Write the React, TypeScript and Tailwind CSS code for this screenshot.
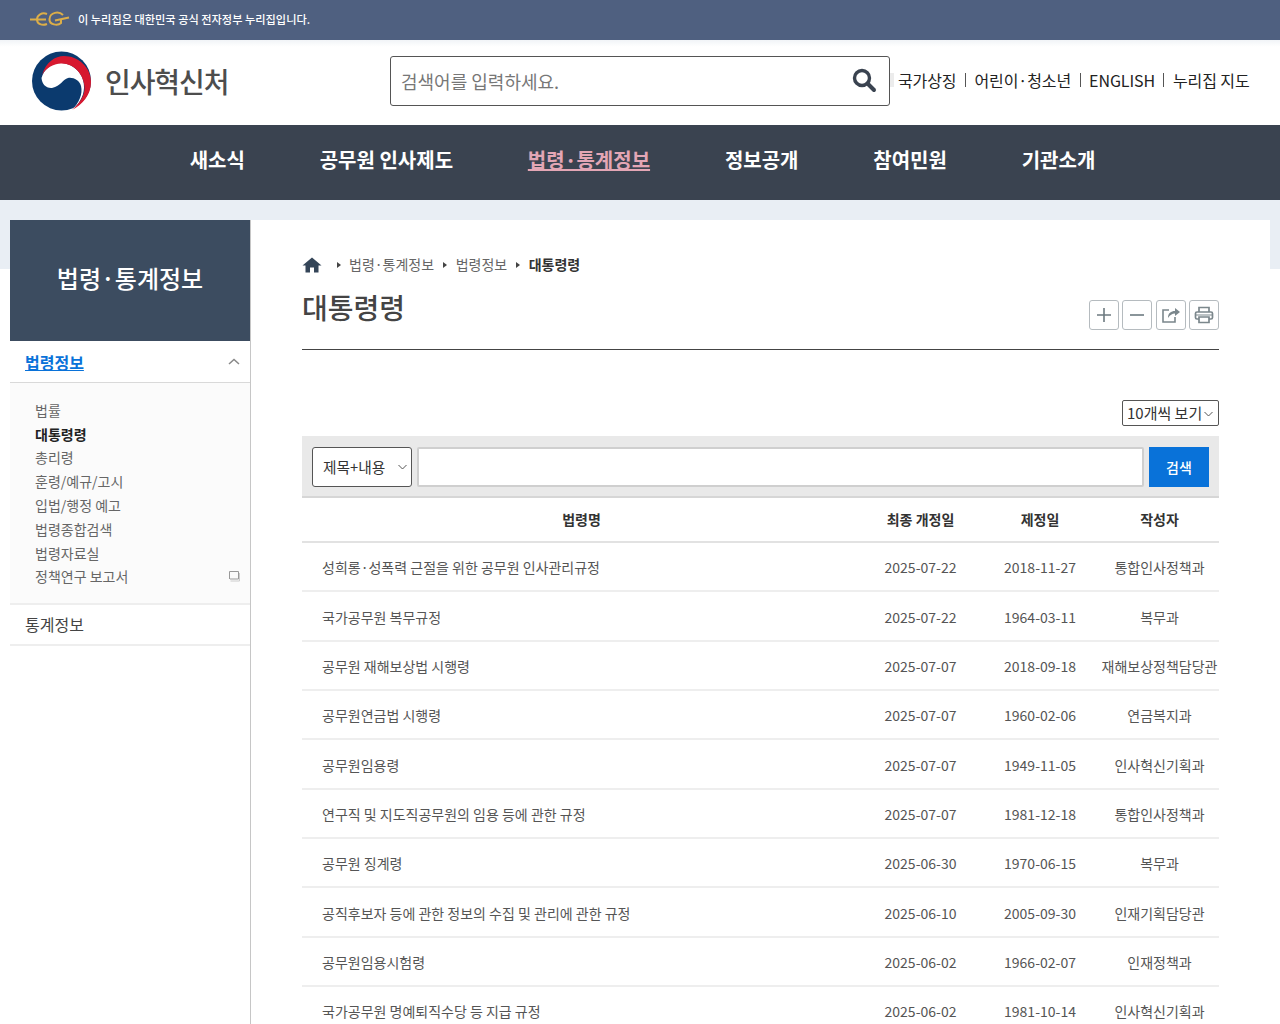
const font = "font-['Noto_Sans_CJK_KR','Noto_Sans',sans-serif]";

const rows = [
  ['성희롱·성폭력 근절을 위한 공무원 인사관리규정', '2025-07-22', '2018-11-27', '통합인사정책과'],
  ['국가공무원 복무규정', '2025-07-22', '1964-03-11', '복무과'],
  ['공무원 재해보상법 시행령', '2025-07-07', '2018-09-18', '재해보상정책담당관'],
  ['공무원연금법 시행령', '2025-07-07', '1960-02-06', '연금복지과'],
  ['공무원임용령', '2025-07-07', '1949-11-05', '인사혁신기획과'],
  ['연구직 및 지도직공무원의 임용 등에 관한 규정', '2025-07-07', '1981-12-18', '통합인사정책과'],
  ['공무원 징계령', '2025-06-30', '1970-06-15', '복무과'],
  ['공직후보자 등에 관한 정보의 수집 및 관리에 관한 규정', '2025-06-10', '2005-09-30', '인재기획담당관'],
  ['공무원임용시험령', '2025-06-02', '1966-02-07', '인재정책과'],
  ['국가공무원 명예퇴직수당 등 지급 규정', '2025-06-02', '1981-10-14', '인사혁신기획과'],
];

const navItems = ['새소식', '공무원 인사제도', '법령·통계정보', '정보공개', '참여민원', '기관소개'];
const subItems = ['법률', '대통령령', '총리령', '훈령/예규/고시', '입법/행정 예고', '법령종합검색', '법령자료실', '정책연구 보고서'];

function Logo() {
  return (
    <svg width="62" height="60" viewBox="0 0 62 60" className="shrink-0 mb-[3px]">
      <circle cx="30.500" cy="30" r="29.500" fill="#0b3a6e" />
      <path d="M10.500 27C13 18 21 11.500 30.500 12C43 12.500 54 24 53 37C52.500 46 48 53 41.300 58.700C48 52 52 43 50 35C48.500 29 42 26 37 27C32 28 30 35 21 37C15 37.500 11 33 10.500 27Z" fill="#fff" />
      <path d="M11 24C15 11 24 5 33 5C47 5 60 16 60 31C60 44 51 54 41.300 58.700C49 52 54 44 53.500 36C53 24 43 12 30 12.500C22 13 15 17 11 24Z" fill="#d7182f" />
    </svg>
  );
}

function EgovMark() {
  return (
    <svg width="40" height="18" viewBox="0 0 40 18" fill="none" stroke="#dcae48" strokeWidth="2" className="shrink-0">
      <path d="M0 9.500H16" />
      <path d="M17 4C12 2 7 5 7 9.500C7 14 12 16 17 14" />
      <path d="M33 5C29 1 20 2 19.500 9C19 15 28 16 31 13V10" />
      <path d="M25 10.500L39 7.500" />
    </svg>
  );
}

function SearchIcon() {
  return (
    <svg width="26" height="26" viewBox="0 0 26 26" fill="none" stroke="#3a4350" className="shrink-0 mb-[2px]">
      <circle cx="11" cy="11" r="7.500" strokeWidth="3.400" />
      <path d="M16.500 16.500L23 23" strokeWidth="4" strokeLinecap="round" />
    </svg>
  );
}

function ToolButton({ children }: { children: React.ReactNode }) {
  return (
    <button className="w-[30px] h-[30px] border border-[#b5bbbf] rounded-[3px] bg-white flex items-center justify-center">
      {children}
    </button>
  );
}

function Caret() {
  return <span className="w-0 h-0 border-y-[3px] border-y-transparent border-l-[4px] border-l-[#444] shrink-0" />;
}

export default function App() {
  return (
    <div className={`${font} relative w-[1280px] h-[1024px] overflow-hidden bg-white text-[#333]`}>
      {/* top notice */}
      <div className="h-10 bg-[#4f6080] flex items-center pl-[30px] gap-2 pb-[2px]">
        <EgovMark />
        <span className="text-[11.200px] font-medium text-white">이 누리집은 대한민국 공식 전자정부 누리집입니다.</span>
      </div>

      {/* header */}
      <header className="h-[85px] bg-linear-to-b from-[#f1f4f7] to-white to-[8%] flex items-center relative">
        <div className="w-[390px] pl-[31px] flex items-center gap-3">
          <Logo />
          <span className="text-[28px] font-medium text-[#4d4d4d] tracking-[-1.100px] leading-none -mt-[3px]">인사혁신처</span>
        </div>
        <div className="w-[500px] h-[50px] border border-[#555] rounded-[3px] flex items-center justify-between pl-2.5 pr-3 -mt-[3px]">
          <span className="text-lg text-[#777]">검색어를 입력하세요.</span>
          <SearchIcon />
        </div>
        <nav className="flex items-center text-base text-[#222] tracking-[-0.100px] -mt-[5px]">
          <span className="w-1 h-3.5 bg-[#ececec] mr-1" />
          <span>국가상징</span>
          <span className="w-px h-3.5 bg-[#555] mx-[8.500px]" />
          <span>어린이·청소년</span>
          <span className="w-px h-3.5 bg-[#555] mx-[8.500px]" />
          <span>ENGLISH</span>
          <span className="w-px h-3.5 bg-[#555] mx-[8.500px]" />
          <span>누리집 지도</span>
        </nav>
      </header>

      {/* main nav */}
      <nav className="h-[75px] bg-[#3a4350] flex items-center justify-center gap-[74.800px] pl-[5px] pb-[6px]">
        {navItems.map((item, i) => (
          <span
            key={item}
            className={i === 2 ? 'text-xl font-bold text-[#e3a6b5] underline' : 'text-xl font-bold text-white'}
          >
            {item}
          </span>
        ))}
      </nav>

      {/* page body */}
      <div className="relative pt-5 bg-white">
        <div className="absolute left-0 right-0 top-0 h-[69px] bg-[#e9eef4]" />
        <div className="relative ml-2.5 w-[1260px] flex h-[804px]">
          <aside className="w-[241px] shrink-0 border-r border-[#c6c6c6] bg-white">
            <div className="h-[121px] bg-[#3c4c60] flex items-center justify-center pb-1.5 text-2xl font-medium text-white">
              법령·통계정보
            </div>
            <div className="h-[42px] border-b border-[#d9d9d9] flex items-center justify-between pl-[15px] pr-[10px]">
              <span className="text-base font-bold text-[#0972d9] underline">법령정보</span>
              <svg width="12" height="7" viewBox="0 0 12 7" fill="none" stroke="#888" strokeWidth="1.500">
                <path d="M1 6L6 1.500L11 6" />
              </svg>
            </div>
            <ul className="bg-[#fbfbfb] pl-[25px] pr-[10px] pt-[15px] pb-[15px] text-sm text-[#666]">
              {subItems.map((item, i) => (
                <li key={item} className="h-[23.800px] flex items-center justify-between">
                  <span className={i === 1 ? 'font-bold text-[#222]' : ''}>{item}</span>
                  {i === 7 && (
                    <svg width="12" height="12" viewBox="0 0 12 12" fill="none" stroke="#999">
                      <path d="M1.500 9V1.500H10.500V9H2" />
                      <path d="M2.500 11H11.500V3" stroke="#ccc" />
                    </svg>
                  )}
                </li>
              ))}
            </ul>
            <div className="h-[43px] border-y-2 border-[#eeeeee] flex items-center pl-[15px] pb-px text-base text-[#444]">
              통계정보
            </div>
          </aside>

          <main className="w-[1019px] bg-white pl-[51px] pr-[51px] pt-[30px]">
            <div className="flex items-center h-[30px] text-sm text-[#666]">
              <svg width="20" height="16" viewBox="0 0 20 16" fill="#344558" className="shrink-0">
                <path d="M10 0.500L0.500 8.500H3.500V15.500H8V10.500H12V15.500H16.500V8.500H19.500Z" />
              </svg>
              <span className="w-[15px]" />
              <Caret />
              <span className="ml-2 mb-[2px]">법령·통계정보</span>
              <span className="w-[8.500px]" />
              <Caret />
              <span className="ml-[9px] mb-[2px]">법령정보</span>
              <span className="w-[8.500px]" />
              <Caret />
              <span className="ml-[9px] mb-[2px] font-bold text-[#333]">대통령령</span>
            </div>
            <div className="flex items-end justify-between h-[50px] pb-[19px] border-b border-[#444] box-content">
              <h1 className="text-[28px] font-medium text-[#444] leading-none self-start mt-[13px]">대통령령</h1>
              <div className="flex gap-[3.500px]">
                <ToolButton>
                  <svg width="16" height="16" viewBox="0 0 16 16" stroke="#6d7a80" strokeWidth="1.600"><path d="M8 1V15M1 8H15" /></svg>
                </ToolButton>
                <ToolButton>
                  <svg width="16" height="16" viewBox="0 0 16 16" stroke="#6d7a80" strokeWidth="1.600"><path d="M1 8H15" /></svg>
                </ToolButton>
                <ToolButton>
                  <svg width="20" height="18" viewBox="0 0 20 18" fill="none" stroke="#7b878c" strokeWidth="1.600">
                    <path d="M8 4H2V16H14V11" />
                    <path d="M7 12C7 7 10 5 14 5V2L19 6L14 10V7.500C11 7.500 9 9 7 12Z" fill="#7b878c" stroke="none" />
                  </svg>
                </ToolButton>
                <ToolButton>
                  <svg width="20" height="18" viewBox="0 0 20 18" fill="none" stroke="#7b878c" strokeWidth="1.700">
                    <path d="M5 6V1.500H15V6" />
                    <rect x="1.500" y="6" width="17" height="7" rx="1.500" />
                    <path d="M5 11H15V16.500H5Z" fill="#fff" />
                    <path d="M2 9H18" strokeWidth="1" />
                  </svg>
                </ToolButton>
              </div>
            </div>

            <div className="flex justify-end mt-[50px]">
              <div className="w-[97px] h-[26px] border border-[#555] rounded-[2px] flex items-center justify-between pl-1 pr-[5px] pt-px text-[15px] text-[#333]">
                <span>10개씩 보기</span>
                <svg width="9" height="6" viewBox="0 0 9 6" fill="none" stroke="#555"><path d="M0.500 1L4.500 5L8.500 1" /></svg>
              </div>
            </div>

            <div className="mt-2.5 h-[62px] bg-[#e9e9e9] border-b-2 border-[#d6d6d6] flex items-center gap-[5px] pl-2.5 pr-2.5 pt-[2px]">
              <div className="w-[100px] h-10 bg-white border border-[#555] rounded-[3px] flex items-center justify-between pl-2.5 pr-1 text-[14.700px] text-[#333] shrink-0">
                <span>제목+내용</span>
                <svg width="9" height="6" viewBox="0 0 9 6" fill="none" stroke="#555"><path d="M0.500 1L4.500 5L8.500 1" /></svg>
              </div>
              <div className="flex-1 h-10 bg-white border-2 border-[#cfcfcf] rounded-[2px]" />
              <button className="w-[60px] h-10 bg-[#0972d9] text-white text-sm font-medium shrink-0">검색</button>
            </div>

            <div className="grid grid-cols-[559px_119px_120px_119px] h-[45px] items-center pb-px border-b-2 border-[#e2e2e2] text-sm font-bold text-[#333] text-center">
              <span>법령명</span>
              <span>최종 개정일</span>
              <span>제정일</span>
              <span>작성자</span>
            </div>
            {rows.map((row) => (
              <div
                key={row[0]}
                className="grid grid-cols-[559px_119px_120px_119px] h-[49.350px] items-center pt-px border-b-2 border-[#eeeeee] text-sm text-[#555] text-center"
              >
                <span className="text-left pl-5">{row[0]}</span>
                <span>{row[1]}</span>
                <span>{row[2]}</span>
                <span className="whitespace-nowrap">{row[3]}</span>
              </div>
            ))}
          </main>
        </div>
      </div>
    </div>
  );
}
